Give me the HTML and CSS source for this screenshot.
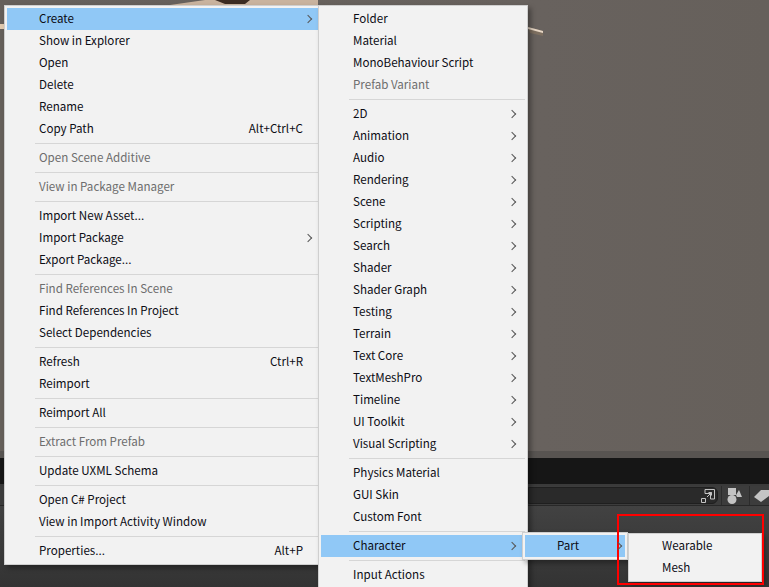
FILE: index.html
```html
<!DOCTYPE html>
<html lang="en">
<head>
<meta charset="utf-8">
<title>Create menu</title>
<link rel="stylesheet" href="styles.css">
</head>
<body>
<div class="editor">
  <div class="scene">
    <svg class="scene-art" width="769" height="60" viewBox="0 0 769 60" aria-hidden="true">
      <polygon points="170,5 205,0 318,0 318,5" fill="#c9b39e"/>
      <polygon points="215,0 250,0 245,4 225,4" fill="#3c2c22"/>
      <rect x="0" y="24" width="5" height="5" fill="#e0c9ae"/>
      <polygon points="528,27 543,31 543,36 530,33" fill="#7d6f60"/>
      <polygon points="528,27 543,31 543,33 528,29" fill="#e8d8c6"/>
    </svg>
  </div>
  <div class="scene-edge"></div>
  <div class="dark-band"></div>
  <div class="toolbar">
    <div class="search">
      <svg class="tool-icon" width="16" height="16" viewBox="0 0 16 16" aria-hidden="true">
        <path d="M5 1.500H14.500V11H10.500V5.500H5Z M1.500 10.500H5.500V14.500H1.500Z M7 9 L11.500 4.500 M8.500 4.500H11.500V7.500" fill="none" stroke="#c4c4c4" stroke-width="1"/>
      </svg>
    </div>
    <button class="tool-btn" type="button" aria-label="Filter by type">
      <svg width="18" height="18" viewBox="0 0 18 18" aria-hidden="true">
        <rect x="3" y="1" width="8" height="7" fill="#c4c4c4"/>
        <polygon points="11,8 14,3 17,10 12,10" fill="#c4c4c4"/>
        <circle cx="7" cy="12.500" r="4.500" fill="#c4c4c4"/>
      </svg>
    </button>
    <button class="tool-btn tool-btn-last" type="button" aria-label="Filter by label">
      <svg width="16" height="18" viewBox="0 0 16 18" aria-hidden="true">
        <polygon points="1,10 8,3 16,3 16,9 8,15" fill="#c4c4c4"/>
      </svg>
    </button>
  </div>
  <div class="lower"></div>
</div>

<div class="menu menu-main">
  <div class="row on"><span>Create</span><i class="arrow"></i></div>
  <div class="row"><span>Show in Explorer</span></div>
  <div class="row"><span>Open</span></div>
  <div class="row"><span>Delete</span></div>
  <div class="row"><span>Rename</span></div>
  <div class="row"><span>Copy Path</span><kbd>Alt+Ctrl+C</kbd></div>
  <div class="sep"></div>
  <div class="row off"><span>Open Scene Additive</span></div>
  <div class="sep"></div>
  <div class="row off"><span>View in Package Manager</span></div>
  <div class="sep"></div>
  <div class="row"><span>Import New Asset...</span></div>
  <div class="row"><span>Import Package</span><i class="arrow"></i></div>
  <div class="row"><span>Export Package...</span></div>
  <div class="sep"></div>
  <div class="row off"><span>Find References In Scene</span></div>
  <div class="row"><span>Find References In Project</span></div>
  <div class="row"><span>Select Dependencies</span></div>
  <div class="sep"></div>
  <div class="row"><span>Refresh</span><kbd>Ctrl+R</kbd></div>
  <div class="row"><span>Reimport</span></div>
  <div class="sep"></div>
  <div class="row"><span>Reimport All</span></div>
  <div class="sep"></div>
  <div class="row off"><span>Extract From Prefab</span></div>
  <div class="sep"></div>
  <div class="row"><span>Update UXML Schema</span></div>
  <div class="sep"></div>
  <div class="row"><span>Open C# Project</span></div>
  <div class="row"><span>View in Import Activity Window</span></div>
  <div class="sep"></div>
  <div class="row"><span>Properties...</span><kbd>Alt+P</kbd></div>
</div>

<div class="menu menu-create">
  <div class="row"><span>Folder</span></div>
  <div class="row"><span>Material</span></div>
  <div class="row"><span>MonoBehaviour Script</span></div>
  <div class="row off"><span>Prefab Variant</span></div>
  <div class="sep"></div>
  <div class="row"><span>2D</span><i class="arrow"></i></div>
  <div class="row"><span>Animation</span><i class="arrow"></i></div>
  <div class="row"><span>Audio</span><i class="arrow"></i></div>
  <div class="row"><span>Rendering</span><i class="arrow"></i></div>
  <div class="row"><span>Scene</span><i class="arrow"></i></div>
  <div class="row"><span>Scripting</span><i class="arrow"></i></div>
  <div class="row"><span>Search</span><i class="arrow"></i></div>
  <div class="row"><span>Shader</span><i class="arrow"></i></div>
  <div class="row"><span>Shader Graph</span><i class="arrow"></i></div>
  <div class="row"><span>Testing</span><i class="arrow"></i></div>
  <div class="row"><span>Terrain</span><i class="arrow"></i></div>
  <div class="row"><span>Text Core</span><i class="arrow"></i></div>
  <div class="row"><span>TextMeshPro</span><i class="arrow"></i></div>
  <div class="row"><span>Timeline</span><i class="arrow"></i></div>
  <div class="row"><span>UI Toolkit</span><i class="arrow"></i></div>
  <div class="row"><span>Visual Scripting</span><i class="arrow"></i></div>
  <div class="sep"></div>
  <div class="row"><span>Physics Material</span></div>
  <div class="row"><span>GUI Skin</span></div>
  <div class="row"><span>Custom Font</span></div>
  <div class="sep"></div>
  <div class="row on"><span>Character</span><i class="arrow"></i></div>
  <div class="sep"></div>
  <div class="row"><span>Input Actions</span></div>
</div>

<div class="menu menu-char">
  <div class="row on"><span>Part</span><i class="arrow"></i></div>
</div>

<div class="menu menu-part">
  <div class="row"><span>Wearable</span></div>
  <div class="row"><span>Mesh</span></div>
</div>

<div class="callout"></div>
</body>
</html>
```
FILE: styles.css
```css
* { box-sizing: border-box; }

html, body {
  margin: 0;
  width: 769px;
  height: 587px;
  overflow: hidden;
}

body {
  position: relative;
  font-family: "Noto Sans CJK KR", "Noto Sans", sans-serif;
  font-size: 11.6px;
  color: #0c0c14;
}

.editor {
  display: flex;
  flex-direction: column;
  height: 587px;
  background: #3b3b3b;
}

.scene {
  height: 451px;
  background: linear-gradient(90deg, #66605b, #68625e 70%, #66605b);
}

.scene-art { display: block; }

.scene-edge {
  height: 7px;
  background: #585451;
}

.dark-band {
  height: 26px;
  background: #161616;
}

.toolbar {
  display: flex;
  align-items: center;
  height: 22px;
  padding-left: 528px;
  background: #3c3c3c;
  border-top: 2px solid #3a3a3a;
  border-bottom: 1px solid #282828;
}

.search {
  display: flex;
  align-items: center;
  justify-content: flex-end;
  width: 195px;
  height: 17px;
  padding-right: 1px;
  background: #2a2a2a;
  border: 1px solid #1f1f1f;
  border-radius: 0 6px 6px 0;
}

.tool-btn {
  display: flex;
  align-items: center;
  justify-content: center;
  width: 26px;
  height: 19px;
  padding: 0;
  margin-left: 3px;
  background: #3c3c3c;
  border: 0;
  border-left: 1px solid #2c2c2c;
}

.tool-btn-last {
  justify-content: flex-start;
  padding-left: 3px;
  flex: 1;
}

.lower {
  flex: 1;
  background: linear-gradient(180deg, #424242 0, #3e3e3e 20px, #393939 50px, #333333 100%);
}

.menu {
  position: absolute;
  display: flex;
  flex-direction: column;
  padding: 2px;
  background: #f2f2f2;
  border: 1px solid #cfcfcf;
  box-shadow: 3px 3px 5px rgba(0, 0, 0, 0.35);
}

.menu-main { left: 4px; top: 5px; width: 315px; height: 560px; padding-right: 0; }
.menu-create { left: 318px; top: 5px; width: 210px; height: 590px; }
.menu-char { left: 522px; top: 532px; width: 106px; height: 28px; }
.menu-part { left: 628px; top: 533px; width: 134px; height: 49px; padding: 1px 2px; }

.row {
  position: relative;
  display: flex;
  align-items: center;
  flex: none;
  height: 22px;
  padding: 0 15px 2px 32px;
  white-space: nowrap;
  line-height: 20px;
}

.row span { flex: 1; }
.on { background: #90c8f6; }
.off { color: #6d6d6d; }

.menu-create .row { padding-right: 10px; }
.menu-main .arrow { margin-right: -8px; }
.menu-char .row { padding-right: 4px; padding-left: 32px; }
.menu-char .arrow { z-index: 1; }
.menu-part .row { padding-left: 31px; }

kbd { font: inherit; }

.arrow {
  flex: none;
  width: 6px;
  height: 6px;
  margin-right: 0;
  margin-top: 2px;
  border-top: 1px solid #555;
  border-right: 1px solid #555;
  transform: rotate(45deg);
}

.sep {
  position: relative;
  flex: none;
  height: 7px;
}

.sep::after {
  content: "";
  position: absolute;
  left: 28px;
  right: 0;
  top: 3px;
  height: 1px;
  background: #d6d6d6;
}

.callout {
  position: absolute;
  left: 617px;
  top: 514px;
  width: 147px;
  height: 71px;
  border: 2px solid #ff0000;
}
```
